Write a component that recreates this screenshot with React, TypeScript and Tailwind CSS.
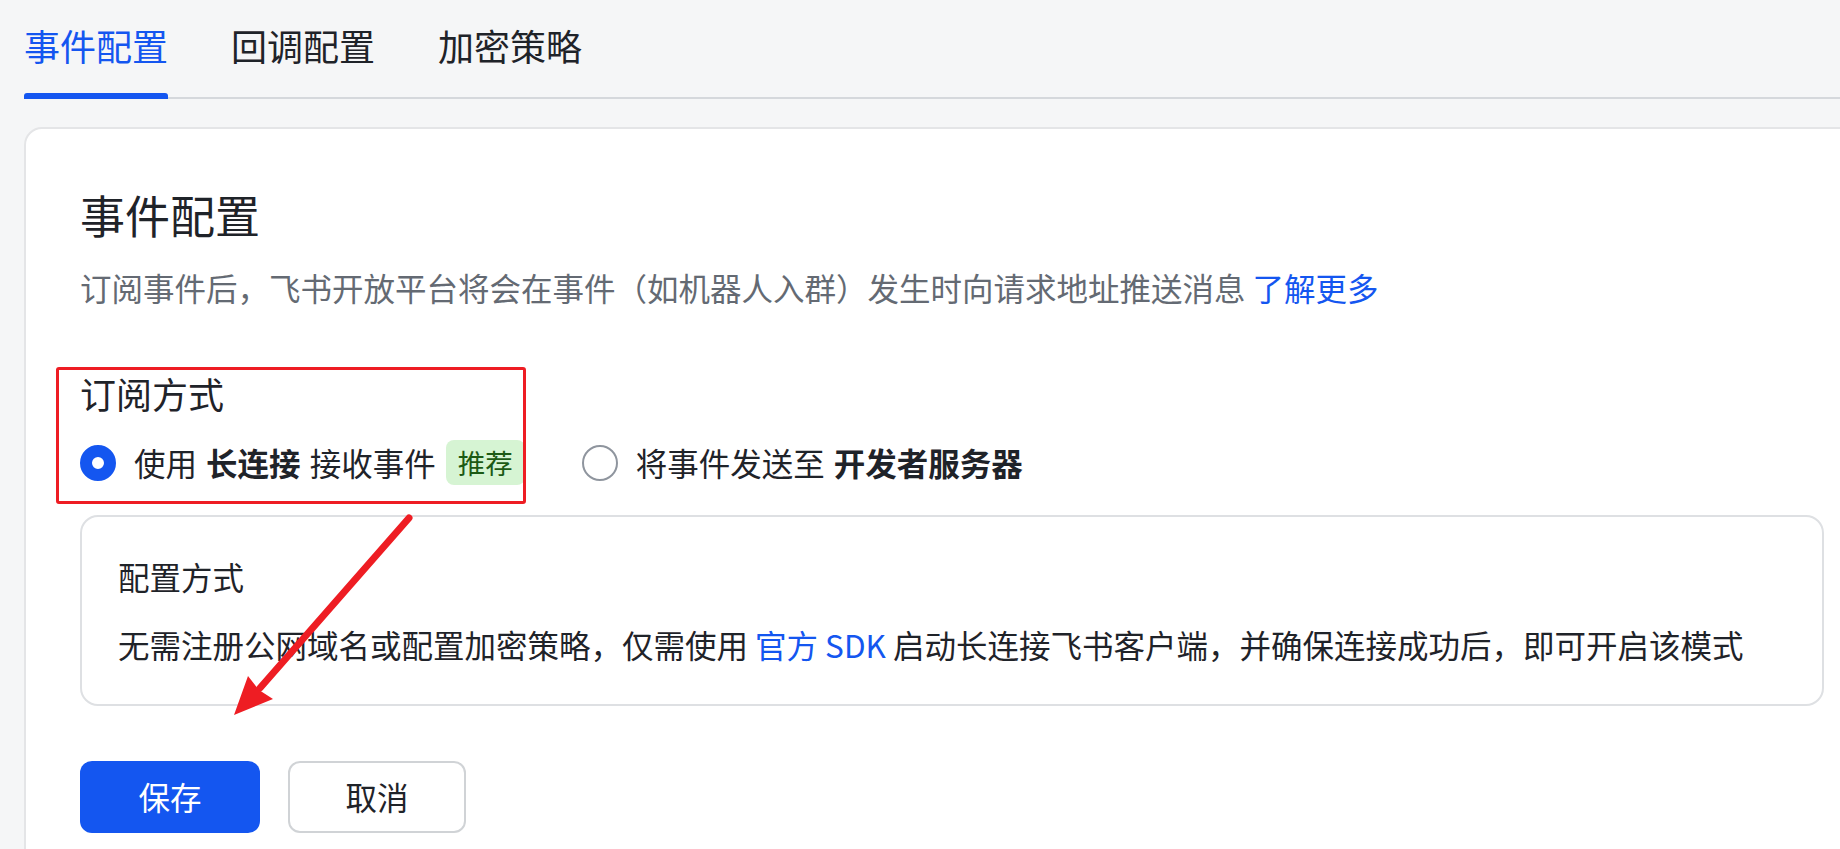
const tabs = ["事件配置", "回调配置", "加密策略"];

const App = () => {
  return (
    <div className="relative w-[1840px] h-[849px] overflow-hidden bg-[#f5f6f7] text-[#1f2329] font-['Noto_Sans_CJK_SC','Noto_Sans',sans-serif]">
      {/* tab bar */}
      <div className="ml-[24px] flex gap-[63px] border-b-2 border-[#d5d8dc]">
        {tabs.map((t, i) => (
          <div key={t} className="-mb-[2px] flex flex-col">
            <div className={`pt-[18px] text-[36px] leading-[54px] ${i === 0 ? "text-[#1456f0]" : "text-[#1f2329]"}`}>{t}</div>
            <div className={`mt-[21px] h-[6px] rounded-t-[3px] ${i === 0 ? "bg-[#1456f0]" : "bg-transparent"}`} />
          </div>
        ))}
      </div>

      {/* card */}
      <div className="ml-[24px] mt-[28px] w-[1856px] rounded-[18px] border-2 border-[#e4e5e7] bg-white px-[54px] pt-[54px] pb-[60px]">
        <h2 className="text-[45px] leading-[63px]">事件配置</h2>
        <p className="mt-[18px] text-[31.5px] leading-[47px] text-[#646a73]">
          订阅事件后，飞书开放平台将会在事件（如机器人入群）发生时向请求地址推送消息 <span className="text-[#1456f0]">了解更多</span>
        </p>

        <div className="mt-[55px] text-[36px] leading-[54px]">订阅方式</div>

        <div className="mt-[20px] flex h-[45px] items-center text-[31.5px] leading-[47px]">
          <div className="flex items-center">
            <span className="h-[36px] w-[36px] rounded-full border-[12px] border-[#1456f0] bg-white" />
            <span className="ml-[18px]">
              使用 <b className="mx-[2px] font-bold">长连接</b> 接收事件
            </span>
            <span className="ml-[10px] h-[45px] rounded-[8px] bg-[#d6f4d3] px-[12px] text-[27.5px] leading-[45px] text-[#1c5a14]">推荐</span>
          </div>
          <div className="ml-[57px] flex items-center">
            <span className="h-[36px] w-[36px] rounded-full border-2 border-[#8f959e] bg-white" />
            <span className="ml-[18px]">
              将事件发送至 <b className="ml-[2px] font-bold">开发者服务器</b>
            </span>
          </div>
        </div>

        <div className="mt-[30px] rounded-[18px] border-2 border-[#dee0e3] p-[36px] text-[31.5px] leading-[47px]">
          <div>配置方式</div>
          <div className="mt-[21px]">
            无需注册公网域名或配置加密策略，仅需使用 <span className="text-[#1456f0]">官方 SDK</span> 启动长连接飞书客户端，并确保连接成功后，即可开启该模式
          </div>
        </div>

        <div className="mt-[55px] flex gap-[28px]">
          <button className="h-[72px] w-[180px] rounded-[12px] bg-[#1456f0] text-[31.5px] text-white">保存</button>
          <button className="h-[72px] w-[178px] rounded-[12px] border-2 border-[#d0d3d6] bg-white text-[31.5px] text-[#1f2329]">取消</button>
        </div>
      </div>

      {/* annotation: red box + arrow */}
      <div className="pointer-events-none absolute left-[56px] top-[367px] h-[137px] w-[470px] rounded-[3px] border-[3px] border-[#ee1d23]" />
      <svg className="pointer-events-none absolute left-0 top-0" width="1840" height="849">
        <line x1="409" y1="518" x2="260" y2="688" stroke="#ee1d23" strokeWidth="7" strokeLinecap="round" />
        <polygon points="234,715 248,676 259,690 273,699" fill="#ee1d23" />
      </svg>
    </div>
  );
};

export default App;
